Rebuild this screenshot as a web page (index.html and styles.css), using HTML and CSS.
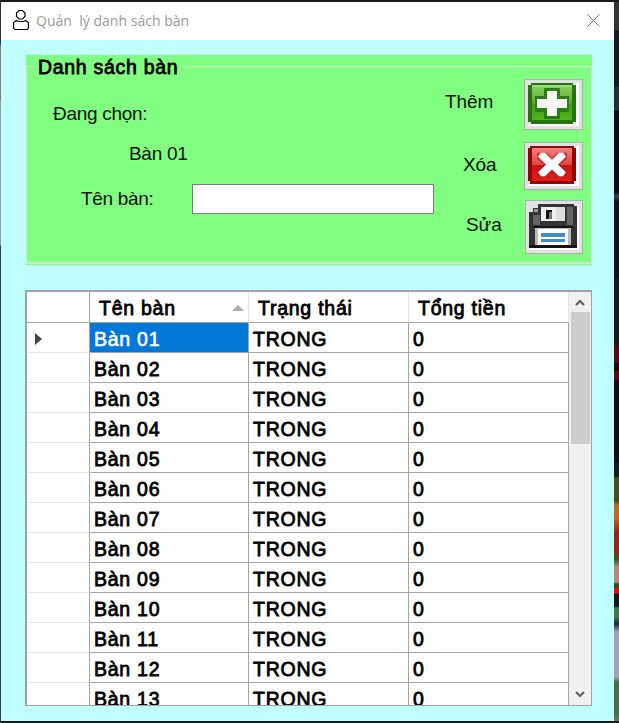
FILE: index.html
```html
<!DOCTYPE html>
<html lang="vi">
<head>
<meta charset="utf-8">
<title>Quản lý danh sách bàn</title>
<link rel="stylesheet" href="styles.css">
</head>
<body>
<div class="desktop">
<main class="window">
  <header class="titlebar">
    <svg class="user" width="18" height="22" viewBox="0 0 18 22" fill="none" stroke="#000" stroke-width="1.2"><path d="M7 1.500h3.500l2.500 2.500v3.500l-2.500 2.500H7L4.500 7.500V4z"/><path d="M4.500 11.500 1.600 13.500v5.500l1.200 1.500h12.400l1.200-1.500v-5.500l-3-2-1.600 1H6.200z"/></svg>
    <h1>Quản&nbsp; lý danh sách bàn</h1>
    <svg class="close" width="13" height="13" viewBox="0 0 13 13" stroke="#777" stroke-width="1"><path d="M.5.5l12 12M12.500.5l-12 12"/></svg>
  </header>
  <section class="group">
    <fieldset>
      <legend>Danh sách bàn</legend>
      <div class="form">
        <div class="fields">
          <p class="chosen">Đang chọn:</p>
          <p class="current">Bàn 01</p>
          <label class="name">Tên bàn:<input type="text"></label>
        </div>
        <div class="actions">
          <div class="action add"><span>Thêm</span><button>
            <svg viewBox="0 0 48 41" preserveAspectRatio="none"><defs><linearGradient id="g" x2="0" y2="1"><stop stop-color="#86cf63"/><stop offset=".48" stop-color="#57ad33"/><stop offset=".52" stop-color="#3f9c18"/><stop offset="1" stop-color="#55b51f"/></linearGradient></defs><path fill="#267510" d="M3 0h42v2h3v37h-3v2H3v-2H0V2h3z"/><path fill="#9bdc76" d="M4 2h40v3H4z"/><path fill="url(#g)" d="M4 4h40v33H4z"/><path fill="#2f7c16" d="M16 5h16v8h9v16h-9v7H16v-7H7V13h9z"/><path fill="#f7f7f7" d="M19 8h10v8h10v9H29v8H19v-8H9v-9h10z"/></svg></button></div>
          <div class="action remove"><span>Xóa</span><button>
            <svg viewBox="0 0 48 39" preserveAspectRatio="none"><defs><linearGradient id="r" x2="0" y2="1"><stop stop-color="#f28080"/><stop offset=".5" stop-color="#e24646"/><stop offset=".53" stop-color="#c91515"/><stop offset="1" stop-color="#d92020"/></linearGradient></defs><path fill="#920505" d="M2 0h44v2h2v34h-2v3H2v-3H0V2h2z"/><path fill="url(#r)" d="M4 2h40v34H4z"/><path fill="#b51616" opacity=".6" d="M9 7h10l5 5 5-5h10v6l-7 6 7 6v6H29l-5-5-5 5H9v-6l7-6-7-6z"/><path fill="#fafafa" d="M13 7h4l7 7 7-7h4l3 4-8 8 8 8-3 4h-4l-7-7-7 7h-4l-3-4 8-8-8-8z"/></svg></button></div>
          <div class="action save"><span>Sửa</span><button>
            <svg viewBox="0 0 48 44" preserveAspectRatio="none"><path fill="#333" d="M9 0h36v2h3v42H0V8h4V4h5z"/><path fill="#666" d="M4 11h7v10H4zM38 3h6v18h-6z"/><path fill="#151515" d="M4 22h40v2H4zM0 41h48v3H0z"/><path fill="#999" d="M5 5h4v3H5z"/><path fill="#f0f0f0" d="M12 3h24v14H12z"/><path fill="#ddd" d="M27 3h9v14h-9z"/><path fill="#111" d="M17 6h6v9h-6z"/><path fill="#777" d="M20 8h3v7h-3z"/><path fill="#bbb" d="M6 24h36v17H6z"/><path fill="#fff" d="M9 25h30v16H9z"/><path fill="#438bc5" d="M12 29h24v4H12zM12 35h24v3H12z"/></svg></button></div>
        </div>
      </div>
    </fieldset>
  </section>
  <section class="grid">
    <div class="table">
      <div class="row head"><span></span><span>Tên bàn<i class="sort"></i></span><span>Trạng thái</span><span>Tổng tiền</span></div>
      <div class="row selected"><span><i class="pointer"></i></span><span>Bàn 01</span><span>TRONG</span><span>0</span></div>
      <div class="row"><span></span><span>Bàn 02</span><span>TRONG</span><span>0</span></div>
      <div class="row"><span></span><span>Bàn 03</span><span>TRONG</span><span>0</span></div>
      <div class="row"><span></span><span>Bàn 04</span><span>TRONG</span><span>0</span></div>
      <div class="row"><span></span><span>Bàn 05</span><span>TRONG</span><span>0</span></div>
      <div class="row"><span></span><span>Bàn 06</span><span>TRONG</span><span>0</span></div>
      <div class="row"><span></span><span>Bàn 07</span><span>TRONG</span><span>0</span></div>
      <div class="row"><span></span><span>Bàn 08</span><span>TRONG</span><span>0</span></div>
      <div class="row"><span></span><span>Bàn 09</span><span>TRONG</span><span>0</span></div>
      <div class="row"><span></span><span>Bàn 10</span><span>TRONG</span><span>0</span></div>
      <div class="row"><span></span><span>Bàn 11</span><span>TRONG</span><span>0</span></div>
      <div class="row"><span></span><span>Bàn 12</span><span>TRONG</span><span>0</span></div>
      <div class="row"><span></span><span>Bàn 13</span><span>TRONG</span><span>0</span></div>
    </div>
    <div class="scrollbar">
      <svg width="10" height="7" viewBox="0 0 10 7" fill="none" stroke="#606060" stroke-width="2.2"><path d="M1 6l4-4 4 4"/></svg>
      <div class="thumb"></div>
      <svg class="down" width="10" height="7" viewBox="0 0 10 7" fill="none" stroke="#606060" stroke-width="2.2"><path d="M1 1l4 4 4-4"/></svg>
    </div>
  </section>
</main>
<aside class="backdrop"></aside>
</div>
</body>
</html>
```
FILE: styles.css
```css
* { box-sizing: border-box; }
body { margin: 0; background: #1c1a1b; font: 19px/22px "Liberation Sans", Arial, sans-serif; letter-spacing: -.3px; color: #111; overflow: hidden; }
p, h1 { margin: 0; }
.desktop { display: flex; width: 619px; height: 723px; padding: 2px 0 2px 1px; background: linear-gradient(#343031 0 44px, #9b7774 46px 100px, #a09b98 102px 244px, #383536 247px) left / 1px 100% no-repeat, #1c1a1b; }
.window { width: 613px; height: 719px; background: #c0ffff; }
.backdrop { flex: 1; background: linear-gradient(#333 0 28px, #16181b 29px 84px, #292b2e 85px 108px, #090b0e 109px 190px, #444 194px, #111 200px 275px, #191716 276px 342px, #5b0713 343px 360px, #17090c 361px 368px, #5b0713 369px 376px, #160b0d 380px 460px, #191919 461px 474px, #4b4b20 476px 499px, #b86b20 503px 516px, #962416 530px 550px, #35572a 557px, #b68878 565px 580px, #2d4d28 582px 586px, #f00 587px 591px, #171717 592px 604px, #43764b 606px 615px, #24213d 622px, #aaa0b4 630px 675px, #496d4b 680px 710px, #65775f); }
.titlebar { display: flex; align-items: center; height: 38px; padding: 0 14px 0 11px; background: #fff; }
.user { margin-top: -2px; }
.titlebar h1 { flex: 1; margin-left: 6px; padding-bottom: 1px; font: 14px/20px "Open Sans", sans-serif; letter-spacing: .02px; color: #999; }
.close { margin-top: -2px; }
.group { width: 566px; height: 210px; margin: 15px 0 0 25px; background: #80ff80; }
fieldset { height: 209px; margin: 0; padding: 0; border: 1px solid #d2e5d2; border-bottom-width: 2px; }
legend { height: 22px; margin-left: 8px; padding: 0 4px 0 3px; font-size: 19.5px; line-height: 24px; letter-spacing: .7px; color: #000; -webkit-text-stroke: .8px; }
.form { display: flex; justify-content: space-between; }
.fields { display: flex; flex-direction: column; width: 407px; padding-top: 26px; }
.chosen { margin-left: 26px; }
.current { margin: 18px 0 19px 102px; }
.name { display: flex; align-items: center; margin-left: 54px; }
.name input { width: 242px; height: 30px; margin-left: auto; padding: 0 4px; border: 1px solid #7a7a7a; background: #fff; font: inherit; outline: 0; }
.actions { width: 146px; padding: 2px 8px 0 0; }
.action { display: flex; justify-content: space-between; }
.action span { margin-top: 12px; letter-spacing: -.1px; }
.action button { width: 59px; height: 51px; padding: 3px; border: 1px solid #adadad; background: #e1e1e1; display: flex; }
.action svg { width: 51px; height: 43px; border: solid #fff; border-width: 0 3px 2px 0; }
.remove { margin-top: 12px; padding-left: 18px; }
.remove button { height: 48px; }
.remove svg { height: 40px; }
.save { margin-top: 10px; padding-left: 21px; }
.save span { margin-top: 14px; }
.save button { width: 58px; height: 54px; }
.save svg { width: 50px; height: 46px; border-width: 0 2px 2px 0; }
.grid { display: flex; width: 567px; height: 416px; margin: 25px 0 0 24px; border: 2px solid #a2a2a4; border-width: 2px 1px 1px 2px; background: #fff; overflow: hidden; }
.table { width: 542px; height: 413px; overflow: hidden; color: #000; font-size: 19.5px; -webkit-text-stroke: .8px; letter-spacing: .75px; }
.row { display: grid; grid-template-columns: 63px 159px 160px 160px; height: 30px; line-height: 24px; }
.row span { height: 30px; padding: 4px 0 0 4px; border: 1px solid #a5a5a7; border-width: 0 1px 1px 0; }
.row span:first-child { border-bottom-color: #e6e6e6; }
.head { height: 31px; }
.row.head span { display: flex; align-items: center; height: 31px; padding: 2px 0 0 9px; letter-spacing: .75px; border-right-color: #e4e4e4; }
.row.head span:first-child { border-color: #a5a5a7; }
.sort { margin: 0 4px 0 auto; border: 6px solid transparent; border-top: 0; border-bottom: 6px solid #aaa; }
.selected span:nth-child(2) { background: #0078d7; color: #fff; -webkit-text-stroke: .6px; }
.pointer { display: block; width: 0; margin: 6px 0 0 4px; border: 6px solid transparent; border-right: 0; border-left: 7px solid #444; }
.scrollbar { flex: 1; display: flex; flex-direction: column; align-items: center; padding: 7px 0; background: #f0f0f0; }
.thumb { width: 19px; height: 132px; margin-top: 6px; background: #cdcdcd; }
.down { margin-top: auto; }
```
